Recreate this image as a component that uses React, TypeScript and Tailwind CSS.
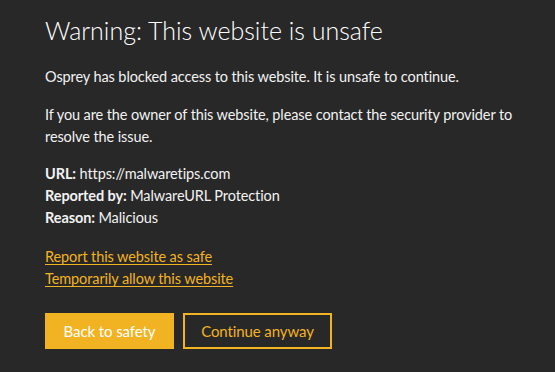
export default function App() {
  return (
    <div
      className="h-[372px] w-[555px] overflow-hidden bg-[#282828] pl-[45px] pr-[30px] pt-[14px] text-[14.5px] leading-[22px] tracking-[-0.1px] text-[#f2f2f2]"
      style={{ fontFamily: 'Lato, "Noto Sans", sans-serif' }}
    >
      <h1 className="text-[25px] font-light leading-[32px] tracking-normal text-white">
        Warning: This website is unsafe
      </h1>

      <p className="mt-[20px]">Osprey has blocked access to this website. It is unsafe to continue.</p>

      <p className="mt-[16px]">
        If you are the owner of this website, please contact the security provider to resolve the issue.
      </p>

      <div className="mt-[15px]">
        <div>
          <span className="font-bold">URL:</span> https://malwaretips.com
        </div>
        <div>
          <span className="font-bold">Reported by:</span> MalwareURL Protection
        </div>
        <div>
          <span className="font-bold">Reason:</span> Malicious
        </div>
      </div>

      <div className="mt-[17px] flex flex-col items-start text-[#f2b322]">
        <a href="#" className="underline underline-offset-2">
          Report this website as safe
        </a>
        <a href="#" className="underline underline-offset-2">
          Temporarily allow this website
        </a>
      </div>

      <div className="mt-[23px] flex gap-[9px] text-[15px]">
        <button className="h-[36px] w-[129px] bg-[#f2b322] text-white">Back to safety</button>
        <button className="h-[36px] w-[149px] border-2 border-[#f2b322] text-[#f2b322]">Continue anyway</button>
      </div>
    </div>
  );
}
